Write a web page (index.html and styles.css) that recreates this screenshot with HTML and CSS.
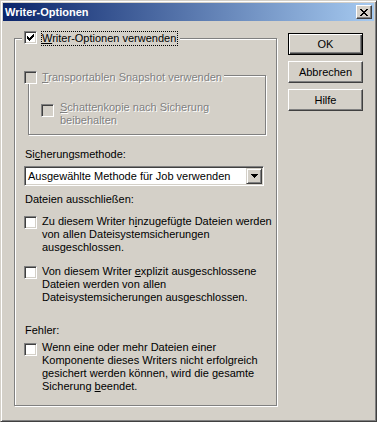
FILE: index.html
```html
<!DOCTYPE html>
<html lang="de">
  <head>
    <meta charset="utf-8">
    <title>Writer-Optionen</title>
    <link rel="stylesheet" href="styles.css">
  </head>
  <body>
    <div class="window">
      <div class="titlebar">
        <span class="title">Writer-Optionen</span>
        <button class="close">
          <svg width="8" height="7" viewBox="0 0 8 7"><path d="M0 0h2v1h-2zM6 0h2v1h-2zM1 1h2v1h-2zM5 1h2v1h-2zM2 2h4v1h-4zM3 3h2v1h-2zM2 4h4v1h-4zM1 5h2v1h-2zM5 5h2v1h-2zM0 6h2v1h-2zM6 6h2v1h-2z"/></svg>
        </button>
      </div>

      <div class="dialog">
        <div class="group outer">
          <div class="legend main">
            <span class="box">
              <svg width="9" height="9" viewBox="0 0 9 9"><path transform="translate(1 1)" d="M0 2h1v3h-1zM1 3h1v3h-1zM2 4h1v3h-1zM3 3h1v3h-1zM4 2h1v3h-1zM5 1h1v3h-1zM6 0h1v3h-1z"/></svg>
            </span>
            <span class="focus"><u>W</u>riter-Optionen verwenden</span>
          </div>

          <div class="group inner">
            <div class="legend snap">
              <span class="box off"></span>
              <span class="text dis"><u>T</u>ransportablen Snapshot verwenden</span>
            </div>
            <div class="check shadow">
              <span class="box off"></span>
              <span class="text dis"><u>S</u>chattenkopie nach Sicherung<br>beibehalten</span>
            </div>
          </div>

          <p class="label method">Si<u>c</u>herungsmethode:</p>
          <div class="combo">
            <span class="combo-text">Ausgewählte Methode für Job verwenden</span>
            <span class="arrow">
              <svg width="7" height="4" viewBox="0 0 7 4"><path d="M0 0h7v1h-1v1h-1v1h-1v1h-1v-1h-1v-1h-1v-1h-1z"/></svg>
            </span>
          </div>

          <p class="label exclude">Dateien ausschließen:</p>
          <div class="check added">
            <span class="box"></span>
            <span class="text">Zu diesem Writer h<u>i</u>nzugefügte Dateien werden<br>von allen Dateisystemsicherungen<br>ausgeschlossen.</span>
          </div>
          <div class="check explicit">
            <span class="box"></span>
            <span class="text">Von diesem Writer <u>e</u>xplizit ausgeschlossene<br>Dateien werden von allen<br>Dateisystemsicherungen ausgeschlossen.</span>
          </div>

          <p class="label errors">Fehler:</p>
          <div class="check abort">
            <span class="box"></span>
            <span class="text">Wenn eine oder mehr Dateien einer<br>Komponente dieses Writers nicht erfolgreich<br>gesichert werden können, wird die gesamte<br>Sicherung <u>b</u>eendet.</span>
          </div>
        </div>

        <div class="buttons">
          <button class="btn default">OK</button>
          <button class="btn">Abbrechen</button>
          <button class="btn">Hilfe</button>
        </div>
      </div>
    </div>
  </body>
</html>
```

FILE: styles.css
```css
* {
  box-sizing: border-box;
  margin: 0;
  padding: 0;
}
body {
  font-family: "Liberation Sans", Arial, sans-serif;
  font-size: 11px;
  line-height: 13px;
  color: #000;
  background: #d4d0c8;
}
u {
  text-underline-offset: 1px;
}

.window {
  width: 377px;
  height: 422px;
  background: #d4d0c8;
  border: 1px solid;
  border-color: #d4d0c8 #404040 #404040 #d4d0c8;
  box-shadow: inset 1px 1px #fff, inset -1px -1px #808080;
  padding: 2px;
}

.titlebar {
  height: 18px;
  display: flex;
  align-items: center;
  justify-content: space-between;
  padding: 0 2px;
  background: linear-gradient(to right, #0a246a, #a6caf0);
}
.title {
  color: #fff;
  font-weight: bold;
}
.close {
  width: 16px;
  height: 14px;
  display: flex;
  align-items: center;
  justify-content: center;
  background: #d4d0c8;
  border: 1px solid;
  border-color: #fff #404040 #404040 #fff;
  box-shadow: inset -1px -1px #808080;
}
.close svg,
.box svg,
.arrow svg {
  display: block;
  shape-rendering: crispEdges;
}

.dialog {
  display: flex;
  align-items: flex-start;
  padding-left: 11px;
}

.group {
  border: 1px solid #808080;
  box-shadow: inset 1px 1px #fff, 1px 1px #fff;
}
.outer {
  width: 263px;
  margin-top: 17px;
  padding: 0 0 12px 9px;
}
.inner {
  width: 238px;
  height: 60px;
  margin: 29px 0 0 4px;
}

.legend {
  display: flex;
  align-items: flex-start;
  width: fit-content;
  background: #d4d0c8;
}
.main {
  margin: -8px 0 0 -2px;
  padding: 0 2px;
}
.focus {
  margin-left: 4px;
  border: 1px dotted #000;
  padding-right: 1px;
}
.snap {
  margin: -5px 0 0 -5px;
  padding-right: 2px;
}
.snap .text {
  margin-left: 5px;
}

.box {
  width: 13px;
  height: 13px;
  flex: none;
  padding: 1px;
  background: #fff;
  border: 1px solid;
  border-color: #808080 #fff #fff #808080;
  box-shadow: inset 1px 1px #404040, inset -1px -1px #d4d0c8;
}
.box.off {
  background: #d4d0c8;
}

.dis {
  color: #808080;
  text-shadow: 1px 1px #fff;
}

.check {
  display: flex;
  align-items: flex-start;
  white-space: nowrap;
}
.check .box {
  margin-top: 1px;
}
.check .text {
  margin-left: 5px;
}
.shadow {
  margin: 17px 0 0 12px;
}
.shadow .box {
  margin-top: 3px;
}
.shadow .text {
  margin-left: 6px;
}
.added {
  margin-top: 9px;
}
.explicit {
  margin-top: 11px;
}
.abort {
  margin-top: 4px;
}
.abort .box {
  margin-top: 2px;
}

.label {
  margin-left: 1px;
}
.method {
  margin-top: 13px;
}
.exclude {
  margin-top: 7px;
}
.errors {
  margin-top: 20px;
}

.combo {
  width: 240px;
  height: 20px;
  margin-top: 5px;
  display: flex;
  align-items: center;
  background: #fff;
  border: 1px solid;
  border-color: #808080 #fff #fff #808080;
  box-shadow: inset 1px 1px #404040, inset -1px -1px #d4d0c8;
  padding: 1px;
}
.combo-text {
  flex: 1;
  padding-left: 2px;
}
.arrow {
  width: 16px;
  height: 16px;
  display: flex;
  align-items: center;
  justify-content: center;
  background: #d4d0c8;
  border: 1px solid;
  border-color: #d4d0c8 #404040 #404040 #d4d0c8;
  box-shadow: inset 1px 1px #fff, inset -1px -1px #808080;
}

.buttons {
  display: flex;
  flex-direction: column;
  gap: 6px;
  margin: 12px 0 0 11px;
}
.btn {
  width: 75px;
  height: 22px;
  font: inherit;
  color: #000;
  background: #d4d0c8;
  border: 1px solid;
  border-color: #fff #404040 #404040 #fff;
  box-shadow: inset -1px -1px #808080;
}
.btn.default {
  border-color: #000;
  box-shadow: inset 1px 1px #fff, inset -1px -1px #404040, inset -2px -2px #808080;
}
```
